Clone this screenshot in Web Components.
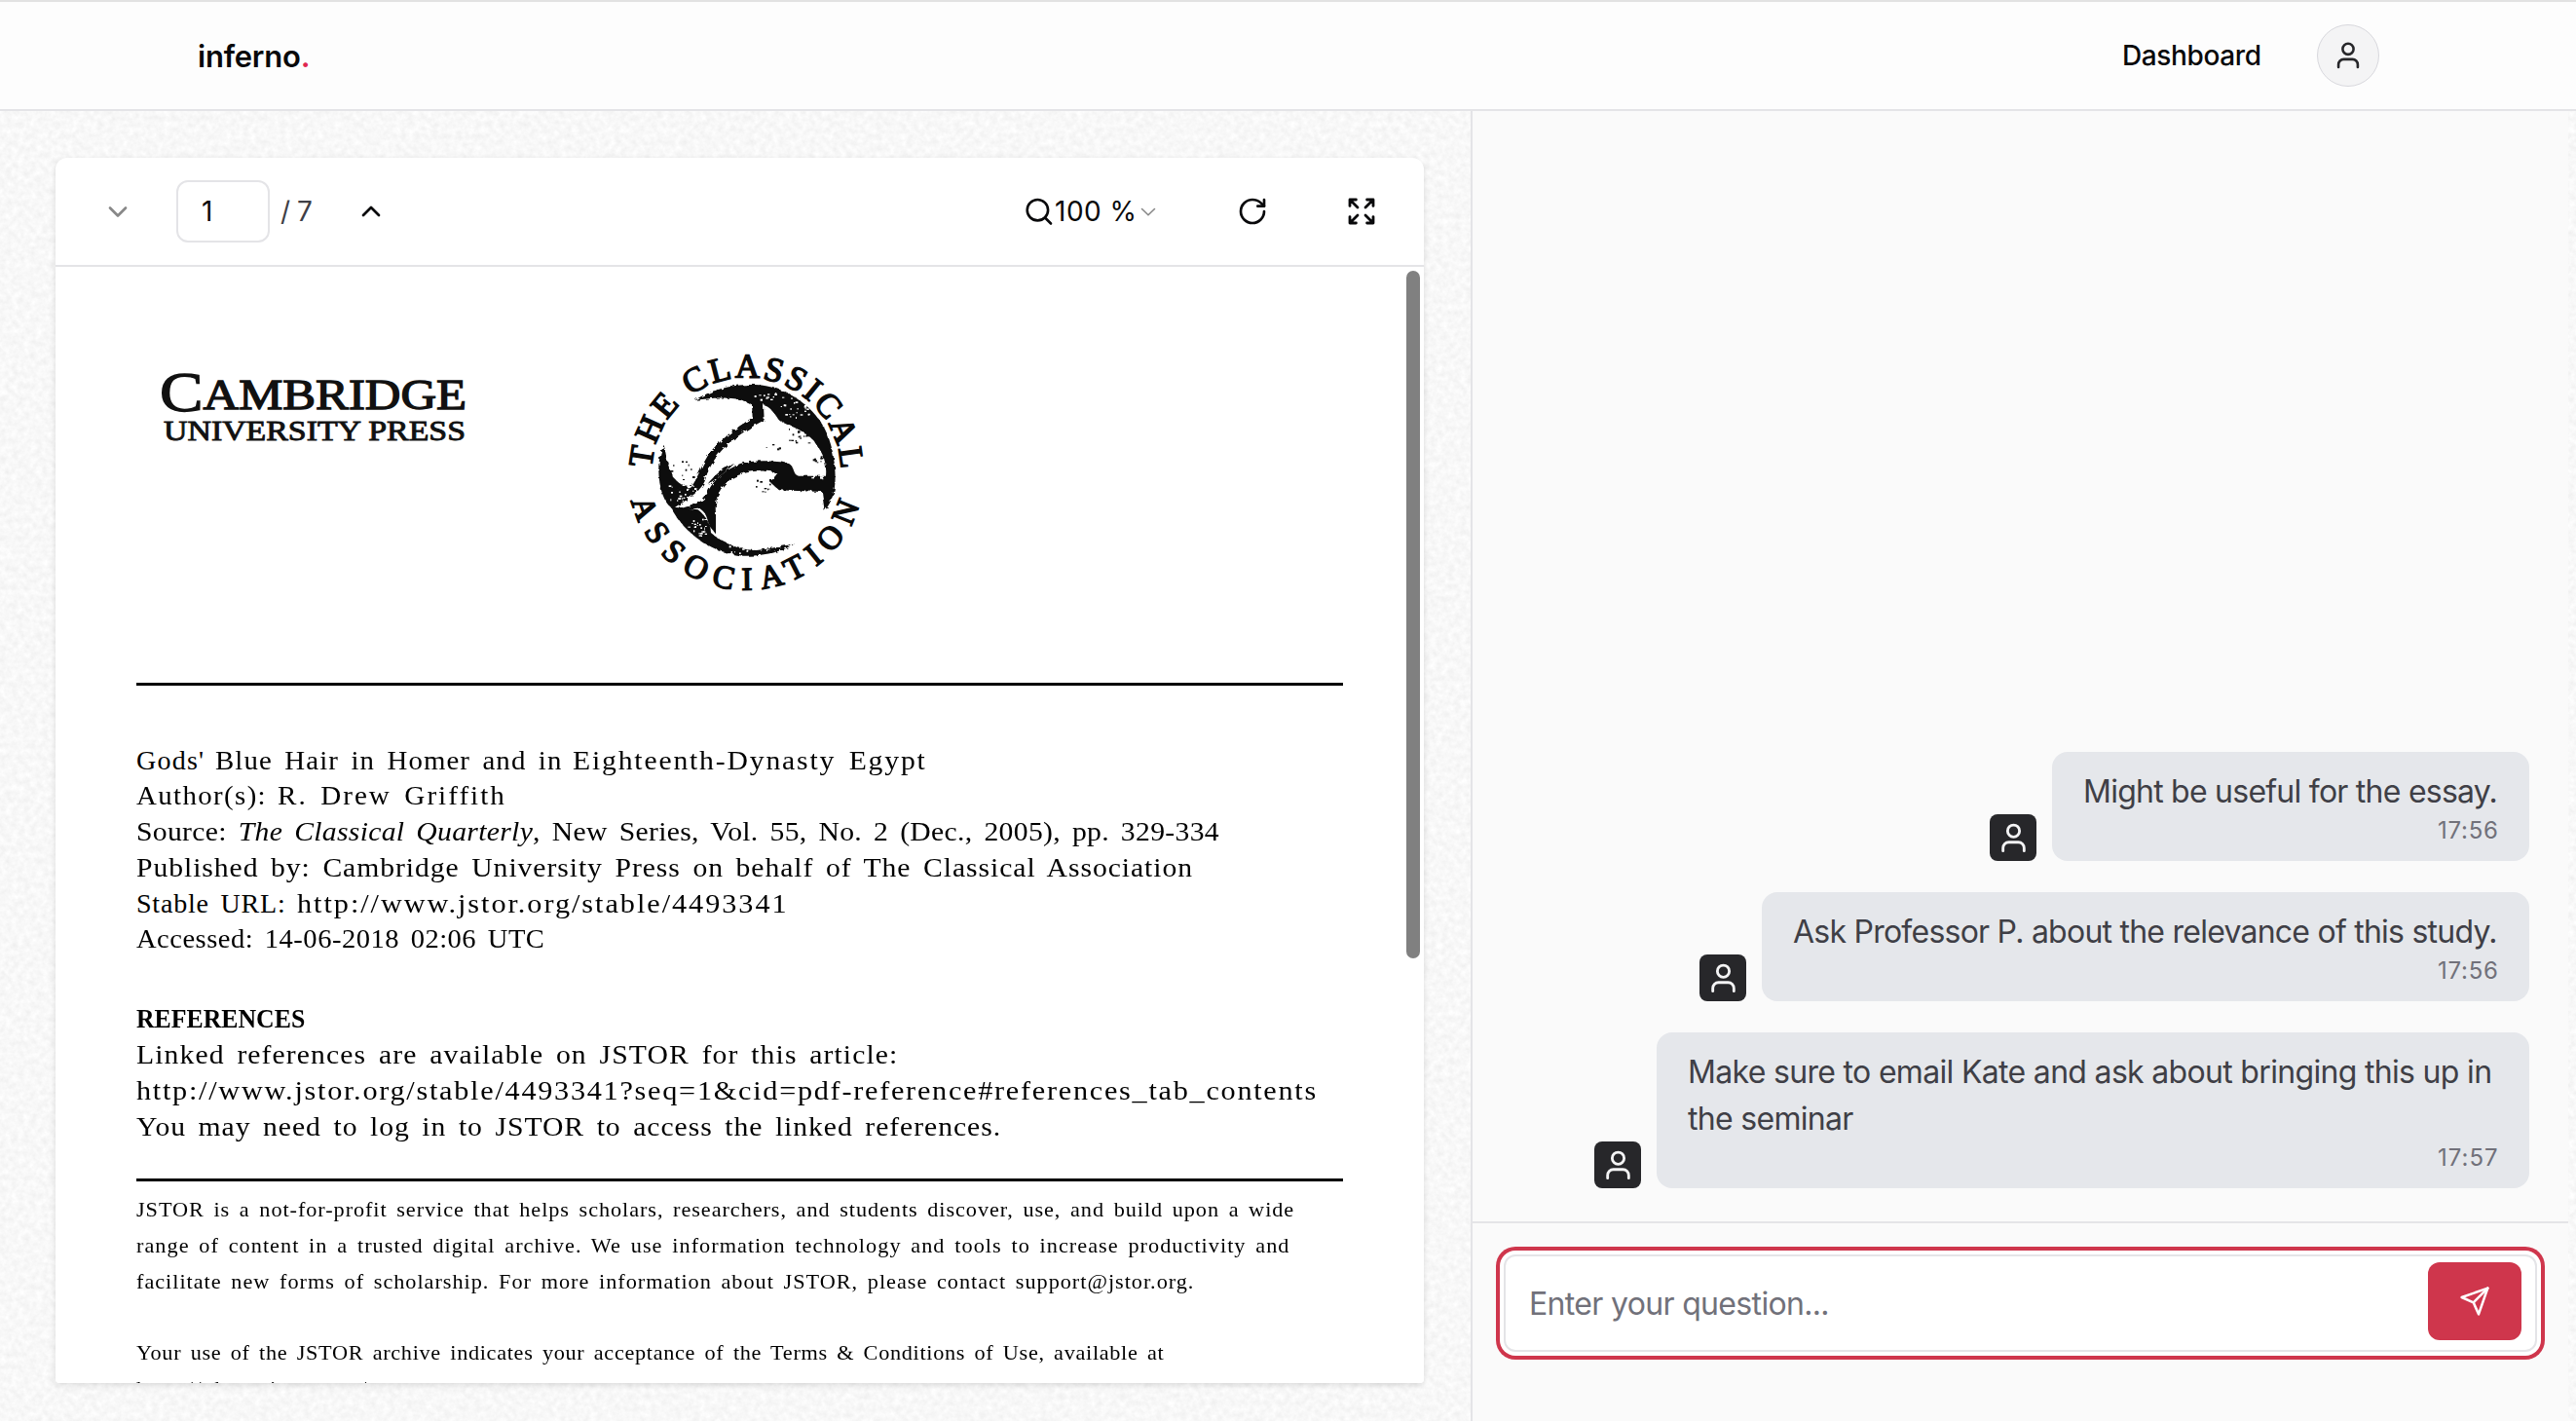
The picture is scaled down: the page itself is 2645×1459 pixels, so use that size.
<!DOCTYPE html>
<html lang="en">
<head>
<meta charset="utf-8">
<title>inferno.</title>
<style>
html,body{margin:0;height:100%;overflow:hidden}
body{font-family:Inter,"Liberation Sans",sans-serif;color:#09090b;background:#f8f8f8}
</style>
</head>
<body>
<inferno-app></inferno-app>
<script>
const define=(name,html,after)=>customElements.define(name,class extends HTMLElement{
  constructor(){super();this.attachShadow({mode:'open'}).innerHTML=html;}
  connectedCallback(){if(after)after.call(this,this.shadowRoot);}
});

/* One line of text, tracked out to a given width. */
customElements.define('fit-text',class extends HTMLElement{
  constructor(){super();this.attachShadow({mode:'open'}).innerHTML=`<style>
    :host{display:block;white-space:nowrap}
    span{display:inline-block;transform-origin:0 50%}</style><span><slot></slot></span>`;}
  connectedCallback(){
    const s=this.shadowRoot.querySelector('span'),w=+this.getAttribute('w'),k=+(this.getAttribute('k')||1);
    const n=this.textContent.length;
    s.style.letterSpacing=((w/k-s.offsetWidth)/(n-1)).toFixed(3)+'px';
    if(k!==1)s.style.transform=`scaleX(${k})`;
    this.style.width=w+'px';
  }
});

const icons={
  user:['0 0 32 32','<circle cx="16" cy="9.3" r="5.6"/><path d="M6.1 28v-2.6a5.4 5.4 0 0 1 5.4-5.5h9a5.4 5.4 0 0 1 5.4 5.5V28"/>',2.6],
  down:['0 0 32 32','<path d="M8 12.5l8 8 8-8"/>',2.7],
  up:['0 0 32 32','<path d="M8 20l8-8 8 8"/>',2.7],
  small:['0 0 32 32','<path d="M9.5 13.5l6.5 6.3 6.5-6.3"/>',1.6],
  search:['0 0 32 32','<circle cx="14.4" cy="14.7" r="10.7"/><path d="M22 22.5l6 6"/>',2.6],
  rotate:['0 0 24 24','<path d="M21 12a9 9 0 1 1-9-9c2.52 0 4.93 1 6.74 2.74L21 8"/><path d="M21 3v5h-5"/>',2],
  expand:['0 0 24 24','<path d="M15 9l6-6M15 15l6 6M9 9 3 3M9 15l-6 6M21 16.2V21h-4.8M21 7.8V3h-4.8M3 16.2V21h4.8M3 7.8V3h4.8"/>',2.1],
  send:['0 0 24 24','<path d="m22 2-7 20-4-9-9-4Z"/><path d="M22 2 11 13"/>',1.9]
};
define('ui-icon','<style>:host{display:block;flex:none;width:32px;height:32px}svg{display:block;width:100%;height:100%}</style><svg fill="none" stroke="currentColor" stroke-linecap="round" stroke-linejoin="round"></svg>',function(r){
  const [v,d,w]=icons[this.getAttribute('name')],s=r.querySelector('svg');
  s.setAttribute('viewBox',v);s.setAttribute('stroke-width',w);s.innerHTML=d;
});

define('site-header',`<style>
:host{display:flex;box-sizing:border-box;height:114px;border-top:2px solid #e2e2e2;border-bottom:2px solid #e4e4e7;background:#fdfdfd;
 align-items:center;justify-content:space-between;padding:0 202px 0 203px;font-size:28px}
.logo{font-weight:600;font-size:31px}i{font-style:normal;color:#e0264f}
nav{display:flex;align-items:center;gap:57px;font-weight:500}
.me{width:62px;height:62px;border:1px solid #d8d8dd;border-radius:50%;background:#f4f4f5;display:grid;place-items:center;color:#27272a}
</style><fit-text class="logo" w="115.5">inferno<i>.</i></fit-text>
<nav><fit-text w="143">Dashboard</fit-text><div class="me"><ui-icon name="user"></ui-icon></div></nav>`);

define('pdf-toolbar',`<style>
:host{display:flex;box-sizing:border-box;height:112px;border-bottom:2px solid #e4e4e7;align-items:center;padding:0 48px;font-size:28px}
.in{box-sizing:border-box;width:96px;height:64px;border:2px solid #e4e4e7;border-radius:12px;margin:0 11px 0 44px;padding-left:24px;line-height:61px}
.t{color:#3f3f46}.up{margin-left:43.5px}.grow{flex:1}
.zoom{display:flex;align-items:center}.s{color:#888;margin-left:-4px}
.off{color:#888}
</style><ui-icon class="off" name="down"></ui-icon><div class="in">1</div><fit-text class="t" w="33">/ 7</fit-text>
<ui-icon class="up" name="up"></ui-icon><span class="grow"></span>
<div class="zoom"><ui-icon name="search"></ui-icon><fit-text w="84">100 %</fit-text><ui-icon class="s" name="small"></ui-icon></div>
<ui-icon name="rotate" style="margin-left:75px"></ui-icon><ui-icon name="expand" style="margin-left:80px"></ui-icon>`);

define('press-logo',`<style>:host{display:block;width:312px;height:78px}svg{display:block;overflow:visible}</style>
<svg width="312" height="78" viewBox="0 0 312 78" font-family="Liberation Serif,serif" fill="#111">
<text x="-2" y="43" font-size="58" stroke="#111" stroke-width="1.3" textLength="315" lengthAdjust="spacingAndGlyphs">C<tspan font-size="44" dy="-2.5">AMBRIDGE</tspan></text>
<text x="2" y="73" font-size="28.5" stroke="#111" stroke-width=".9" textLength="310" lengthAdjust="spacingAndGlyphs">UNIVERSITY PRESS</text></svg>`);

define('classical-seal',`<style>:host{display:block;width:290px;height:280px}svg{display:block}</style>
<svg width="290" height="280" viewBox="0 0 870 840" fill="#0a0a0a">
<defs><path id="t" d="M148 434A291 291 0 0 1 730 434"/><path id="b" d="M84 522A364 364 0 0 0 790 522"/>
<filter id="r" x="-5%" y="-5%" width="110%" height="110%"><feTurbulence type="fractalNoise" baseFrequency=".07" numOctaves="2" seed="4" result="n"/><feDisplacementMap in="SourceGraphic" in2="n" scale="14"/></filter></defs>
<g font-family="Liberation Serif,serif" stroke="#0a0a0a" stroke-width="4.5">
<text font-size="105"><textPath href="#t" startOffset="12" textLength="893">THE CLASSICAL</textPath></text>
<text font-size="100"><textPath href="#b" textLength="950">ASSOCIATION</textPath></text></g>
<g filter="url(#r)">
<path d="M280 212C340 176 410 160 480 166C560 174 640 225 680 300C706 350 716 420 712 470C709 510 695 535 680 554L672 495L540 490L512 465L535 438C500 425 440 430 400 450C360 475 340 510 345 560L345 625L325 600C318 570 310 550 290 545L220 552C260 535 305 535 318 500C335 460 370 430 420 408C460 396 530 398 570 408C590 420 580 440 600 446L684 446C688 400 672 370 645 335C610 300 570 292 540 275C525 250 510 232 492 228L494 274C450 298 410 320 370 360C340 392 318 430 312 460C300 490 270 512 215 545C190 540 170 490 169 430C168 395 176 370 185 350C190 370 196 410 205 430C212 460 240 475 268 482C290 455 300 410 330 370C370 325 420 290 458 266L456 226C420 205 380 205 340 206Z"/>
<path d="M205 540C230 545 260 545 290 550C320 575 330 600 330 622C370 655 420 675 470 675C510 672 550 662 588 655C550 680 490 694 430 692C340 685 250 630 205 540Z"/>
<path d="M320 470C345 440 370 420 402 408C380 430 350 455 320 470Z"/>
</g><g id="d"></g></svg>`,function(r){
  let s=11,o='';const q=()=>(s=(s*16807)%2147483647)/2147483647;
  const spray=(n,x,y,w,h,c)=>{for(let i=0;i<n;i++)o+=`<rect x="${x+q()*w|0}" y="${y+q()*h|0}" width="${3+q()*6|0}" height="${3+q()*4|0}" fill="${c}"/>`;};
  spray(26,545,200,85,70,'#fff');spray(22,570,300,70,45,'#111');spray(10,460,455,60,40,'#111');spray(18,205,400,70,90,'#111');
  spray(22,200,470,80,55,'#fff');spray(26,255,575,60,55,'#fff');spray(14,380,650,70,35,'#fff');spray(8,640,385,30,25,'#111');
  spray(4,490,315,50,70,'#111');spray(14,460,180,90,30,'#fff');spray(6,630,440,60,24,'#fff');
  r.querySelector('#d').innerHTML=o;
});

define('pdf-page',`<style>
:host{display:block;position:relative;flex:1;overflow:hidden;background:#fff;color:#000;font-family:"Liberation Serif",serif}
.logos{display:flex;align-items:flex-start;box-sizing:border-box;height:427px;padding:66px 0 0 109px;gap:142px}
press-logo{margin-top:39px}
hr{border:0;height:2.5px;margin:0 83px 0 82.5px;background:#000}
section{padding-left:83px;font-size:28px;line-height:36.8px;word-spacing:4px}
.row{display:flex;gap:12px}
.a{padding-top:59px}.b{padding-top:45px;height:131px;padding-bottom:0}
.c{font-size:21px;padding-top:11.5px;word-spacing:3px}
.gap{height:36.8px}b{font-weight:700}
.bar{position:absolute;right:4px;top:4px;width:14px;height:706px;border-radius:7px;background:#808080}
</style>
<div class="logos"><press-logo></press-logo><classical-seal></classical-seal></div>
<hr style="margin-top:0">
<section class="a">
<div class="row"><fit-text w="69">Gods'</fit-text><fit-text k="1.03" w="355">Blue Hair in Homer and in</fit-text><fit-text k="1.06" w="362">Eighteenth-Dynasty Egypt</fit-text></div>
<div class="row"><fit-text k="1.03" w="133">Author(s):</fit-text><fit-text k="1.04" w="233">R. Drew Griffith</fit-text></div>
<fit-text k="1.06" w="1112">Source: <i>The Classical Quarterly</i>, New Series, Vol. 55, No. 2 (Dec., 2005), pp. 329-334</fit-text>
<fit-text k="1.06" w="1084">Published by: Cambridge University Press on behalf of The Classical Association</fit-text>
<div class="row"><fit-text w="153">Stable URL:</fit-text><fit-text k="1.08" w="503">http://www.jstor.org/stable/4493341</fit-text></div>
<fit-text k="1.02" w="419">Accessed: 14-06-2018 02:06 UTC</fit-text>
</section>
<section class="b">
<fit-text k=".92" w="173"><b>REFERENCES</b></fit-text>
<fit-text k="1.06" w="781">Linked references are available on JSTOR for this article:</fit-text>
<fit-text k="1.08" w="1211">http://www.jstor.org/stable/4493341?seq=1&amp;cid=pdf-reference#references_tab_contents</fit-text>
<fit-text k="1.06" w="887">You may need to log in to JSTOR to access the linked references.</fit-text>
</section>
<hr style="margin-top:51px">
<section class="c">
<fit-text k="1.06" w="1188">JSTOR is a not-for-profit service that helps scholars, researchers, and students discover, use, and build upon a wide</fit-text>
<fit-text k="1.06" w="1183">range of content in a trusted digital archive. We use information technology and tools to increase productivity and</fit-text>
<fit-text k="1.06" w="1085">facilitate new forms of scholarship. For more information about JSTOR, please contact support@jstor.org.</fit-text>
<div class="gap"></div>
<fit-text k="1.06" w="1055">Your use of the JSTOR archive indicates your acceptance of the Terms &amp; Conditions of Use, available at</fit-text>
<fit-text k="1.06" w="297">http://about.jstor.org/terms</fit-text>
</section>
<div class="bar"></div>`);

define('pdf-viewer',`<style>
:host{display:flex;flex-direction:column;box-sizing:border-box;width:1405px;height:1258px;background:#fff;border-radius:12px 12px 4px 4px;overflow:hidden;box-shadow:0 2px 6px rgba(0,0,0,.13)}
</style><pdf-toolbar></pdf-toolbar><pdf-page></pdf-page>`);

define('chat-message',`<style>
:host{display:flex;justify-content:flex-end;align-items:flex-end;gap:16px}
.av{width:48px;height:48px;border-radius:8px;background:#27272a;color:#f4f4f5;display:grid;place-items:center}
.av ui-icon{width:35px;height:35px}
.bub{background:#e5e7eb;border-radius:16px;padding:17px 32px 15px;color:#3f3f46;font-size:32px;line-height:48px}
.time{display:flex;justify-content:flex-end;font-size:24px;line-height:32px;color:#71717a}
</style><div class="av"><ui-icon name="user"></ui-icon></div>
<div class="bub"><slot></slot><div class="time"></div></div>`,function(r){
  const t=r.querySelector('.time');t.innerHTML=`<fit-text w="62">${this.getAttribute('time')}</fit-text>`;
});

define('chat-input',`<style>
:host{display:block;box-sizing:border-box;border-top:2px solid #e4e4e7;height:205px;padding:32px 32px 0}
.f{box-sizing:border-box;height:100px;border:2px solid #e4e4e7;border-radius:12px;background:#fff;box-shadow:0 0 0 4px #fff,0 0 0 8px #cf364c;
 display:flex;align-items:center;justify-content:space-between;padding:0 14px 4px 24px;font-size:32px;color:#71717a}
button{all:unset;width:96px;height:80px;border-radius:12px;background:#cf364c;color:#fff;display:grid;place-items:center}
fit-text{padding-top:5px}
</style><div class="f"><fit-text w="309">Enter your question...</fit-text><button><ui-icon name="send"></ui-icon></button></div>`);

define('chat-panel',`<style>
:host{display:flex;flex-direction:column;justify-content:flex-end;width:1125px;background:#fafafa;border-left:2px solid #e4e4e7}
.log{display:flex;flex-direction:column;gap:32px;padding:0 40px 34px 0}
</style><div class="log">
<chat-message time="17:56"><fit-text w="426">Might be useful for the essay.</fit-text></chat-message>
<chat-message time="17:56"><fit-text w="724">Ask Professor P. about the relevance of this study.</fit-text></chat-message>
<chat-message time="17:57"><fit-text w="826" style="margin-right:6px">Make sure to email Kate and ask about bringing this up in</fit-text><fit-text w="170">the seminar</fit-text></chat-message>
</div><chat-input></chat-input>`);

define('inferno-app',`<style>
:host{display:flex;flex-direction:column;height:1459px;width:2645px;position:relative}
.grain{position:absolute;inset:0;z-index:-1}
main{display:flex;flex:1;min-height:0}
.doc{width:1510px;box-sizing:border-box;padding:48px 0 0 57px}
</style>
<svg class="grain" width="2645" height="1459"><filter id="g" x="0" y="0" width="100%" height="100%" color-interpolation-filters="sRGB"><feTurbulence type="fractalNoise" baseFrequency=".16" numOctaves="3" seed="7"/>
<feColorMatrix values=".08 0 0 0 .932 .08 0 0 0 .932 .08 0 0 0 .932 0 0 0 0 1"/></filter><rect width="2645" height="1459" filter="url(#g)"/></svg>
<site-header></site-header>
<main><div class="doc"><pdf-viewer></pdf-viewer></div><chat-panel></chat-panel></main>`);
</script>
</body>
</html>
